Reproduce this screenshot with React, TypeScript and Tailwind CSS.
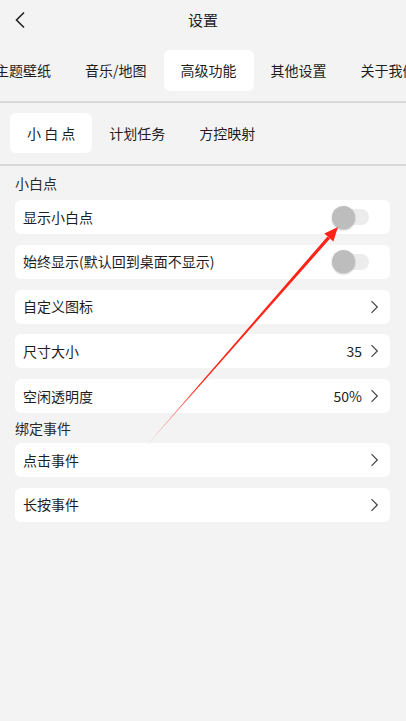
import React from "react";

const font = { fontFamily: '"Noto Sans CJK SC", "Noto Sans", sans-serif' };

function Chevron() {
  return (
    <svg width="9" height="14" viewBox="0 0 9 14" className="shrink-0">
      <path d="M1.5 1.2 L7.3 7 L1.5 12.8" fill="none" stroke="#444" strokeWidth="1.2" />
    </svg>
  );
}

function Toggle() {
  return (
    <div className="relative w-[38px] h-[23px] flex items-center">
      <div className="w-[37px] h-[16px] rounded-full bg-[#ececec]" />
      <div className="absolute left-0 top-0 w-[23px] h-[23px] rounded-full bg-[#bdbdbd] shadow-[0_1px_2px_rgba(0,0,0,0.25)]" />
    </div>
  );
}

function Row({ label, right }: { label: string; right: React.ReactNode }) {
  return (
    <div className="mx-[15px] mr-[16px] mb-[10.75px] h-[34px] rounded-[6px] bg-white flex items-center justify-between pl-[8px] pr-[11px]">
      <span className="text-[14px] text-[#1e1e1e]">{label}</span>
      {right}
    </div>
  );
}

function NavRight({ value }: { value?: string }) {
  return (
    <div className="flex items-center gap-[8px]">
      {value && <span className="text-[14px] text-[#1e1e1e]">{value}</span>}
      <Chevron />
    </div>
  );
}

export default function App() {
  const tabs = ["主题壁纸", "音乐/地图", "高级功能", "其他设置", "关于我们"];
  const sub = ["小 白 点", "计划任务", "方控映射"];
  return (
    <div className="relative w-[406px] min-h-[721px] bg-[#f3f3f3] overflow-hidden" style={font}>
      <div className="relative h-[40px] flex items-center justify-center">
        <svg width="12" height="18" viewBox="0 0 12 18" className="absolute left-[14px] top-[11px]">
          <path d="M10 1.5 L2.5 9 L10 16.5" fill="none" stroke="#222" strokeWidth="1.6" />
        </svg>
        <span className="text-[15px] text-[#1e1e1e]">设置</span>
      </div>
      <div className="mt-[10px] h-[41px] flex ml-[-22px] whitespace-nowrap">
        {tabs.map((t) => (
          <div
            key={t}
            className={
              "h-[41px] px-[17px] flex items-center rounded-[6px] text-[14px] text-[#1e1e1e] " +
              (t === "高级功能" ? "bg-white" : "")
            }
          >
            {t}
          </div>
        ))}
      </div>
      <div className="mt-[10px] h-[2px] bg-[#d8d8d8]" />
      <div className="mt-[10px] h-[40px] flex pl-[10px] whitespace-pre">
        {sub.map((t) => (
          <div
            key={t}
            className={
              "h-[40px] px-[17px] flex items-center rounded-[6px] text-[14px] text-[#1e1e1e] " +
              (t === "小 白 点" ? "bg-white" : "")
            }
          >
            {t}
          </div>
        ))}
      </div>
      <div className="mt-[11px] h-[2px] bg-[#d8d8d8]" />
      <div className="h-[34px] pl-[15px] flex items-center text-[14px] text-[#2a2a2a]">小白点</div>
      <Row label="显示小白点" right={<div className="pr-[9px]"><Toggle /></div>} />
      <Row label="始终显示(默认回到桌面不显示)" right={<div className="pr-[9px]"><Toggle /></div>} />
      <Row label="自定义图标" right={<NavRight />} />
      <Row label="尺寸大小" right={<NavRight value="35" />} />
      <Row label="空闲透明度" right={<NavRight value="50%" />} />
      <div className="h-[30px] mt-[-10.75px] pl-[15px] flex items-center text-[14px] text-[#2a2a2a]">绑定事件</div>
      <Row label="点击事件" right={<NavRight />} />
      <Row label="长按事件" right={<NavRight />} />

      <svg className="absolute left-0 top-0 pointer-events-none" width="406" height="721" viewBox="0 0 406 721">
        <defs>
          <linearGradient id="fade" gradientUnits="userSpaceOnUse" x1="145" y1="447" x2="200" y2="385">
            <stop offset="0" stopColor="#ff2418" stopOpacity="0" />
            <stop offset="1" stopColor="#ff2418" stopOpacity="1" />
          </linearGradient>
        </defs>
        <polygon points="145,447 145.3,447.3 330.1,238.6 327.5,236.4" fill="url(#fade)" />
        <polygon points="338,227 333.3,241.5 324.3,233.5" fill="#ff2418" />
      </svg>
    </div>
  );
}
